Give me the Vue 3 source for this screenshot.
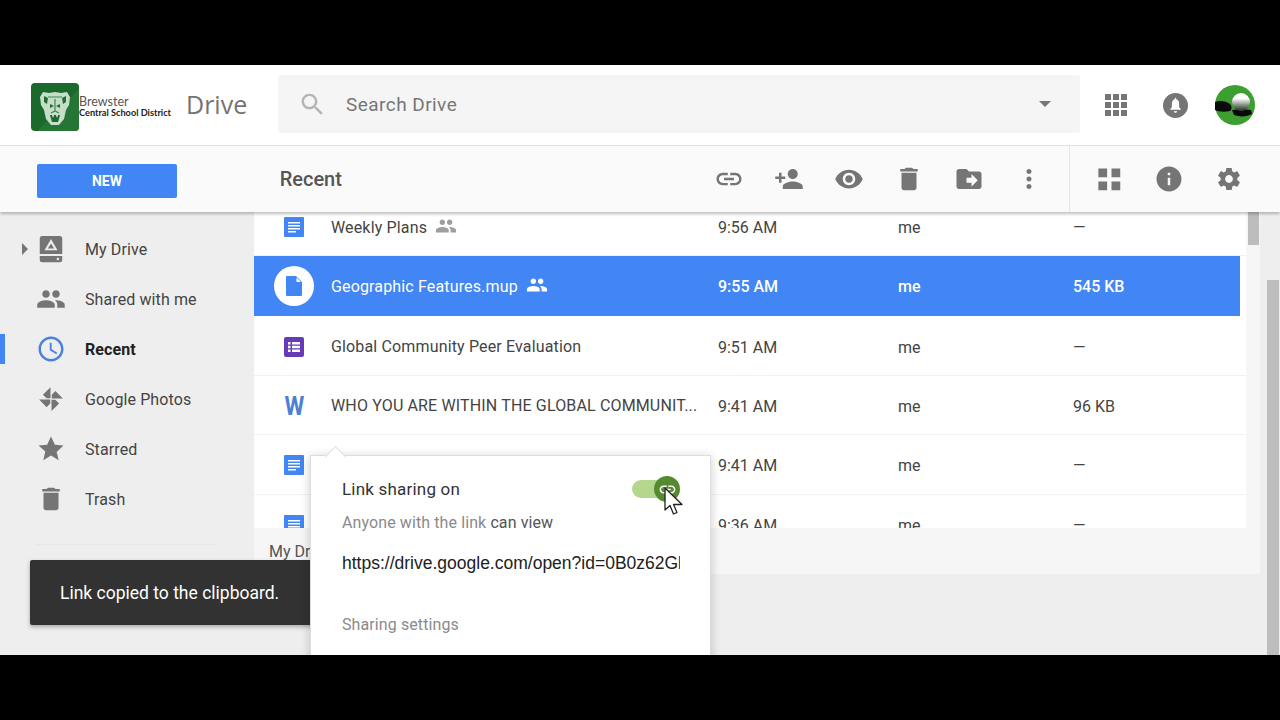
<script setup>
const P = {
  link: 'M3.9 12c0-1.71 1.39-3.1 3.1-3.1h4V7H7c-2.76 0-5 2.24-5 5s2.24 5 5 5h4v-1.9H7c-1.71 0-3.1-1.39-3.1-3.1zM8 13h8v-2H8v2zm9-6h-4v1.9h4c1.71 0 3.1 1.39 3.1 3.1s-1.39 3.1-3.1 3.1h-4V17h4c2.76 0 5-2.24 5-5s-2.24-5-5-5z',
  addPerson: 'M15 12c2.21 0 4-1.79 4-4s-1.79-4-4-4-4 1.79-4 4 1.79 4 4 4zm-9-2V7H4v3H1v2h3v3h2v-3h3v-2H6zm9 4c-2.67 0-8 1.34-8 4v2h16v-2c0-2.66-5.33-4-8-4z',
  eye: 'M12 4.5C7 4.5 2.73 7.61 1 12c1.73 4.39 6 7.5 11 7.5s9.27-3.11 11-7.5c-1.73-4.39-6-7.5-11-7.5zM12 17c-2.76 0-5-2.24-5-5s2.24-5 5-5 5 2.24 5 5-2.24 5-5 5zm0-8c-1.66 0-3 1.34-3 3s1.34 3 3 3 3-1.34 3-3-1.34-3-3-3z',
  trash: 'M6 19c0 1.1.9 2 2 2h8c1.1 0 2-.9 2-2V7H6v12zM19 4h-3.5l-1-1h-5l-1 1H5v2h14V4z',
  move: 'M20 6h-8l-2-2H4c-1.1 0-2 .9-2 2v12c0 1.1.9 2 2 2h16c1.1 0 2-.9 2-2V8c0-1.1-.9-2-2-2zm-6 12v-3h-4v-4h4V8l5 5-5 5z',
  more: 'M12 8c1.1 0 2-.9 2-2s-.9-2-2-2-2 .9-2 2 .9 2 2 2zm0 2c-1.1 0-2 .9-2 2s.9 2 2 2 2-.9 2-2-.9-2-2-2zm0 6c-1.1 0-2 .9-2 2s.9 2 2 2 2-.9 2-2-.9-2-2-2z',
  grid: 'M3.5 3.5h7v7h-7zM14 3.5h7v7h-7zM3.5 14h7v7h-7zM14 14h7v7h-7z',
  info: 'M12 2C6.48 2 2 6.48 2 12s4.48 10 10 10 10-4.48 10-10S17.52 2 12 2zm1 15h-2v-6h2v6zm0-8h-2V7h2v2z',
  gear: 'M19.43 12.98c.04-.32.07-.64.07-.98s-.03-.66-.07-.98l2.11-1.65c.19-.15.24-.42.12-.64l-2-3.46c-.12-.22-.39-.3-.61-.22l-2.49 1c-.52-.4-1.08-.73-1.69-.98l-.38-2.65C14.46 2.18 14.25 2 14 2h-4c-.25 0-.46.18-.49.42l-.38 2.65c-.61.25-1.17.59-1.69.98l-2.49-1c-.23-.09-.49 0-.61.22l-2 3.46c-.13.22-.07.49.12.64l2.11 1.65c-.04.32-.07.65-.07.98s.03.66.07.98l-2.11 1.65c-.19.15-.24.42-.12.64l2 3.46c.12.22.39.3.61.22l2.49-1c.52.4 1.08.73 1.69.98l.38 2.65c.03.24.24.42.49.42h4c.25 0 .46-.18.49-.42l.38-2.65c.61-.25 1.17-.59 1.69-.98l2.49 1c.23.09.49 0 .61-.22l2-3.46c.12-.22.07-.49-.12-.64l-2.11-1.65zM12 15.5c-1.93 0-3.5-1.57-3.5-3.5s1.57-3.5 3.5-3.5 3.5 1.57 3.5 3.5-1.57 3.5-3.5 3.5z',
  people: 'M16 11c1.66 0 2.99-1.34 2.99-3S17.66 5 16 5c-1.66 0-3 1.34-3 3s1.34 3 3 3zm-8 0c1.66 0 2.99-1.34 2.99-3S9.66 5 8 5C6.34 5 5 6.34 5 8s1.34 3 3 3zm0 2c-2.33 0-7 1.17-7 3.5V19h14v-2.5c0-2.33-4.67-3.5-7-3.5zm8 0c-.29 0-.62.02-.97.05 1.16.84 1.97 1.97 1.97 3.45V19h6v-2.5c0-2.33-4.67-3.5-7-3.5z',
  star: 'M12 17.27L18.18 21l-1.64-6.53L22 9.24l-6.91-.59L12 2 8.91 8.65 2 9.24l5.46 4.73L5.82 21z',
  clock: 'M11.99 2C6.47 2 2 6.48 2 12s4.47 10 9.99 10C17.52 22 22 17.52 22 12S17.52 2 11.99 2zM12 20c-4.42 0-8-3.58-8-8s3.58-8 8-8 8 3.58 8 8-3.58 8-8 8zm.5-13H11v6l5.25 3.15.75-1.23-4.5-2.67z',
  photos: 'M11.6 11.4V2.5l-6.1 6 3 2.9zM12.6 11.6h8.9l-6-6.1-2.9 3zM12.4 12.6v8.900l6.100-6-3-2.900zM11.400 12.400H2.500l6 6.100 2.900-3z',
  drive: 'M5 1.5h14a2 2 0 0 1 2 2V16H3V3.5a2 2 0 0 1 2-2zM12 4L6.8 13h10.4zM12 7.5l2.5 4h-5zM3 17.5h18v3a2 2 0 0 1-2 2H5a2 2 0 0 1-2-2zM17.5 19a1 1 0 1 0 0 2 1 1 0 0 0 0-2z',
  search: 'M15.5 14h-.79l-.28-.27C15.41 12.59 16 11.11 16 9.5 16 5.91 13.09 3 9.5 3S3 5.91 3 9.5 5.91 16 9.5 16c1.61 0 3.09-.59 4.23-1.57l.27.28v.79l5 4.99L20.49 19l-4.99-5zm-6 0C7.01 14 5 11.99 5 9.5S7.01 5 9.5 5 14 7.01 14 9.5 11.99 14 9.5 14z'
}

const topActions = [P.link, P.addPerson, P.eye, P.trash, P.move, P.more]

const nav = [
  { label: 'My Drive', icon: P.drive, arrow: true },
  { label: 'Shared with me', icon: P.people },
  { label: 'Recent', icon: P.clock, active: true },
  { label: 'Google Photos', icon: P.photos },
  { label: 'Starred', icon: P.star },
  { label: 'Trash', icon: P.trash }
]

// the last two names sit behind the sharing popup
const rows = [
  { id: 1, name: 'Weekly Plans', type: 'doc', shared: true, time: '9:56 AM', size: '—' },
  { id: 2, name: 'Geographic Features.mup', type: 'file', shared: true, selected: true, time: '9:55 AM', size: '545 KB' },
  { id: 3, name: 'Global Community Peer Evaluation', type: 'form', time: '9:51 AM', size: '—' },
  { id: 4, name: 'WHO YOU ARE WITHIN THE GLOBAL COMMUNIT...', type: 'word', time: '9:41 AM', size: '96 KB' },
  { id: 5, name: '', type: 'doc', time: '9:41 AM', size: '—' },
  { id: 6, name: '', type: 'doc', time: '9:36 AM', size: '—' }
]
</script>

<template>
  <div class="screen">
    <div class="letterbox"></div>
    <div class="app">
      <header class="header">
        <div class="brand">
          <svg class="crest" viewBox="0 0 48 48">
            <rect width="48" height="48" rx="4" fill="#1b6a2b" />
            <path d="M48 6v38a4 4 0 0 1-4 4H6z" fill="#257534" />
            <path d="M9 14l3-5 6 1 6-1 6 1 6-1 3 5-1 8-3 5-2 9-5 6h-8l-5-6-2-9-3-5z" fill="#c6ddc8" />
            <path d="M13 13l4 2-1 6-3-2zM35 13l-4 2 1 6 3-2zM19 21l4 2-4 2zM29 21l-4 2 4 2z" fill="#1f6d2f" />
            <path d="M24 16v12M20 30l4-2 4 2M17 14h14" stroke="#3f8a4d" stroke-width="1.2" fill="none" />
            <path d="M19 32h10l-2 7h-6z" fill="#1b6a2b" />
            <path d="M21 32l1 3 1-3zM27 32l-1 3-1-3z" fill="#e6f1e6" />
          </svg>
          <div class="district">
            <span class="district-top">Brewster</span>
            <span class="district-bottom">Central School District</span>
          </div>
          <span class="drive-title">Drive</span>
        </div>
        <div class="search">
          <svg class="search-icon" viewBox="0 0 24 24"><path :d="P.search" /></svg>
          <span class="search-text">Search Drive</span>
          <span class="search-caret"></span>
        </div>
        <div class="header-right">
          <svg class="apps" viewBox="0 0 22 22">
            <rect v-for="n in 9" :key="n" :x="(n - 1) % 3 * 8" :y="Math.floor((n - 1) / 3) * 8" width="6" height="6" />
          </svg>
          <svg class="bell" viewBox="0 0 24 24">
            <circle cx="12" cy="12" r="12" fill="#757575" />
            <path d="M12 19c.9 0 1.6-.7 1.6-1.5h-3.2c0 .8.7 1.5 1.6 1.5zm5-3v-.7l-1.5-1.6v-3.4c0-2.1-1.1-3.8-2.8-4.3v-.5c0-.5-.3-.9-.7-.9s-.7.4-.7.9V6c-1.7.5-2.8 2.2-2.8 4.3v3.4L7 15.3v.7z" fill="#fff" />
          </svg>
          <svg class="avatar" viewBox="0 0 40 40">
            <defs>
              <linearGradient id="ball" x1="0" y1="0" x2="0" y2="1">
                <stop offset="0.3" stop-color="#fff" />
                <stop offset="0.9" stop-color="#3a4a3a" />
              </linearGradient>
            </defs>
            <circle cx="20" cy="20" r="20" fill="#3c9f30" />
            <path d="M0 17c5-2 11-1 15 2 2 2 2 6 0 7-5 1-11 1-15-1z" fill="#0a0a0a" />
            <path d="M17 25c5-1 13-1 19 0l1 4c-5 3-13 3-18 1z" fill="#0a0a0a" />
            <circle cx="26" cy="17" r="9" fill="url(#ball)" />
          </svg>
        </div>
      </header>

      <div class="toolbar">
        <div class="toolbar-left"><button class="new-btn">NEW</button></div>
        <div class="toolbar-title">Recent</div>
        <div class="tool-group">
          <svg v-for="(d, i) in topActions" :key="i" class="tool" viewBox="0 0 24 24"><path :d="d" fill-rule="evenodd" /></svg>
        </div>
        <div class="tool-group views">
          <svg class="tool" viewBox="0 0 24 24"><path :d="P.grid" /></svg>
          <svg class="tool" viewBox="0 0 24 24"><path :d="P.info" /></svg>
          <svg class="tool" viewBox="-1.5 -1.5 27 27"><path :d="P.gear" /></svg>
        </div>
      </div>

      <div class="main">
        <aside class="sidebar">
          <div v-for="item in nav" :key="item.label" class="nav-item" :class="{ active: item.active }">
            <span class="nav-arrow" :class="{ on: item.arrow }"></span>
            <svg class="nav-icon" viewBox="0 0 24 24"><path :d="item.icon" fill-rule="evenodd" /></svg>
            <span class="nav-label">{{ item.label }}</span>
          </div>
          <div class="nav-divider"></div>
        </aside>

        <section class="content">
          <div class="list-area">
            <div class="list">
              <div v-for="row in rows" :key="row.id" class="row" :class="{ selected: row.selected }">
                <div class="type-cell">
                  <svg v-if="row.type === 'doc'" class="type-icon" viewBox="0 0 20 20">
                    <rect width="20" height="20" rx="1" fill="#4285f4" />
                    <path d="M4 5h12v1.5H4zM4 8h12v1.5H4zM4 11h12v1.5H4zM4 14h8v1.5H4z" fill="#fff" />
                  </svg>
                  <svg v-else-if="row.type === 'form'" class="type-icon" viewBox="0 0 20 20">
                    <rect width="20" height="20" rx="2" fill="#673ab7" />
                    <path d="M4 5h2.5v2.5H4zM8 5h8v2.5H8zM4 8.8h2.5v2.5H4zM8 8.8h8v2.5H8zM4 12.6h2.5v2.5H4zM8 12.6h8v2.5H8z" fill="#fff" />
                  </svg>
                  <span v-else-if="row.type === 'word'" class="word-icon">W</span>
                  <span v-else class="file-badge">
                    <svg class="file-icon" viewBox="0 0 16 20"><path d="M1 0h9l6 6v13a1 1 0 0 1-1 1H1a1 1 0 0 1-1-1V1a1 1 0 0 1 1-1zm9.5 1.5V6H15z" fill="#4285f4" fill-rule="evenodd" /></svg>
                  </span>
                </div>
                <div class="name-cell">
                  <span class="name">{{ row.name }}</span>
                  <svg v-if="row.shared" class="shared-icon" viewBox="0 0 24 24"><path :d="P.people" /></svg>
                </div>
                <div class="time-cell">{{ row.time }}</div>
                <div class="owner-cell">me</div>
                <div class="size-cell">{{ row.size }}</div>
              </div>
            </div>
            <div class="list-scroll"><div class="list-thumb"></div></div>
          </div>
          <div class="path-bar">My Drive</div>
        </section>

        <div class="page-scroll"><div class="page-thumb"></div></div>
      </div>

      <div class="toast">Link copied to the clipboard.</div>

      <div class="popup">
        <div class="popup-head">
          <span>Link sharing on</span>
          <span class="switch">
            <span class="switch-knob">
              <svg viewBox="0 0 24 24"><path :d="P.link" /></svg>
            </span>
          </span>
        </div>
        <div class="popup-sub">Anyone with the link <span class="popup-strong">can view</span></div>
        <div class="popup-url">https://drive.google.com/open?id=0B0z62GlxQ7mVc2hhcmluZw</div>
        <div class="popup-settings">Sharing settings</div>
      </div>

      <svg class="cursor" viewBox="0 0 20 29">
        <path d="M1 1v22l5-4.5 3.5 8.5 3.5-1.5-3.5-8H18z" fill="#fff" stroke="#222" stroke-width="1.3" stroke-linejoin="round" />
      </svg>
    </div>
    <div class="letterbox"></div>
  </div>
</template>

<style>
html, body {
  margin: 0;
  background: #000;
}
</style>

<style scoped>
.screen {
  width: 1280px;
  height: 720px;
  display: flex;
  flex-direction: column;
  overflow: hidden;
  font-family: Roboto, "Liberation Sans", sans-serif;
  background: #000;
}

.letterbox {
  height: 65px;
  flex-shrink: 0;
  background: #000;
}

.app {
  position: relative;
  height: 590px;
  display: flex;
  flex-direction: column;
  overflow: hidden;
  background: #eee;
}

.header {
  height: 80px;
  flex-shrink: 0;
  display: flex;
  align-items: center;
  background: #fff;
  border-bottom: 1px solid #e5e5e5;
}

.brand {
  width: 278px;
  padding-left: 31px;
  box-sizing: border-box;
  display: flex;
  align-items: center;
}

.crest {
  width: 48px;
  height: 48px;
  margin-top: 4px;
  flex-shrink: 0;
}

.district {
  width: 107px;
  margin-top: 4px;
  display: flex;
  flex-direction: column;
  white-space: nowrap;
}

.district-top {
  font-family: Lato, sans-serif;
  font-size: 12.5px;
  line-height: 11px;
  color: #555;
}

.district-bottom {
  font-family: Lato, sans-serif;
  font-size: 9.2px;
  line-height: 11px;
  font-weight: 700;
  color: #222;
}

.drive-title {
  margin-top: -2px;
  font-family: "Open Sans", sans-serif;
  font-size: 25px;
  color: #737373;
}

.search {
  width: 802px;
  height: 58px;
  margin-top: -2px;
  padding: 0 29px 0 20px;
  box-sizing: border-box;
  display: flex;
  align-items: center;
  background: #f5f5f5;
  border-radius: 3px;
}

.search-icon {
  width: 29px;
  height: 29px;
  fill: #b4b4b4;
}

.search-text {
  margin-left: 19px;
  flex: 1;
  font-size: 19px;
  letter-spacing: 0.45px;
  color: #777;
}

.search-caret {
  width: 0;
  height: 0;
  border-left: 6px solid transparent;
  border-right: 6px solid transparent;
  border-top: 6px solid #757575;
}

.header-right {
  flex: 1;
  display: flex;
  align-items: center;
  padding-left: 25px;
}

.apps {
  width: 22px;
  height: 22px;
  fill: #757575;
}

.bell {
  width: 25px;
  height: 25px;
  margin-left: 36px;
}

.avatar {
  width: 40px;
  height: 40px;
  margin-left: 27px;
}

.toolbar {
  position: relative;
  z-index: 2;
  height: 66px;
  flex-shrink: 0;
  display: flex;
  align-items: center;
  background: #fafafa;
  box-shadow: 0 2px 3px rgba(0, 0, 0, 0.25);
}

.toolbar-left {
  width: 280px;
  padding-left: 37px;
  box-sizing: border-box;
}

.new-btn {
  display: block;
  width: 140px;
  height: 34px;
  margin-top: 4px;
  border: 0;
  border-radius: 2px;
  background: #4285f4;
  color: #fff;
  font-family: Roboto, sans-serif;
  font-size: 14px;
  font-weight: 700;
}

.toolbar-title {
  width: 435px;
  font-size: 20px;
  font-weight: 500;
  color: #555;
}

.tool-group {
  display: flex;
  align-items: center;
  gap: 30px;
  height: 100%;
  padding-right: 25px;
}

.tool-group.views {
  padding: 0 36px 0 24px;
  border-left: 1px solid #e5e5e5;
}

.tool {
  width: 30px;
  height: 30px;
  fill: #757575;
}

.main {
  flex: 1;
  min-height: 0;
  display: flex;
}

.sidebar {
  width: 254px;
  flex-shrink: 0;
  padding-top: 12px;
  box-sizing: border-box;
  background: #eee;
}

.nav-item {
  position: relative;
  height: 50px;
  display: flex;
  align-items: center;
  padding-left: 22px;
  font-size: 16px;
  letter-spacing: 0.1px;
  color: #444;
}

.nav-item.active {
  font-weight: 700;
  color: #212121;
}

.nav-item.active::before {
  content: "";
  position: absolute;
  left: 0;
  top: 10px;
  width: 5px;
  height: 30px;
  background: #4285f4;
}

.nav-arrow {
  width: 0;
  height: 0;
  border-top: 6px solid transparent;
  border-bottom: 6px solid transparent;
  border-left: 6px solid transparent;
}

.nav-arrow.on {
  border-left-color: #757575;
}

.nav-icon {
  width: 30px;
  height: 30px;
  margin-left: 8px;
  fill: #757575;
}

.active .nav-icon {
  fill: #4a80e0;
}

.nav-label {
  margin-left: 19px;
}

.nav-divider {
  height: 1px;
  margin: 20px 38px 0 36px;
  background: #e6e6e6;
}

.content {
  width: 1006px;
  flex-shrink: 0;
  display: flex;
  flex-direction: column;
}

.list-area {
  height: 316px;
  flex-shrink: 0;
  display: flex;
  overflow: hidden;
  background: #fff;
}

.list {
  width: 992px;
  flex-shrink: 0;
  margin-top: -15px;
}

.row {
  height: 59.4px;
  padding-top: 2px;
  box-sizing: border-box;
  display: flex;
  align-items: center;
  width: 992px;
  border-bottom: 1px solid #f1f1f1;
  font-size: 16px;
  color: #444;
}

.row.selected {
  width: 986px;
  height: 60px;
  padding-top: 0;
  border-bottom: 0;
  background: #4285f4;
  color: #fff;
}

.type-cell {
  width: 77px;
  padding-left: 3px;
  box-sizing: border-box;
  flex-shrink: 0;
  display: flex;
  justify-content: center;
}

.type-icon {
  width: 20px;
  height: 20px;
}

.word-icon {
  font-size: 26px;
  line-height: 26px;
  font-weight: 700;
  color: #4a80d8;
  transform: scaleX(0.87);
}

.file-badge {
  width: 40px;
  height: 40px;
  display: flex;
  align-items: center;
  justify-content: center;
  border-radius: 50%;
  background: #fff;
}

.file-icon {
  width: 16px;
  height: 20px;
}

.name-cell {
  width: 387px;
  flex-shrink: 0;
  display: flex;
  align-items: center;
  gap: 8px;
  white-space: nowrap;
  letter-spacing: 0.15px;
}

.shared-icon {
  width: 22px;
  height: 22px;
  margin-top: -3px;
  fill: #9e9e9e;
}

.selected .shared-icon {
  fill: #fff;
}

.time-cell,
.owner-cell,
.size-cell {
  margin-top: 1px;
}

.time-cell {
  width: 180px;
  flex-shrink: 0;
}

.owner-cell {
  width: 175px;
  flex-shrink: 0;
}

.selected .time-cell,
.selected .owner-cell,
.selected .size-cell {
  font-weight: 500;
}

.list-scroll {
  width: 14px;
  flex-shrink: 0;
  background: #f6f6f6;
}

.list-thumb {
  width: 11px;
  height: 33px;
  margin-left: 2px;
  background: #bdbdbd;
}

.path-bar {
  height: 46px;
  flex-shrink: 0;
  padding-left: 15px;
  line-height: 48px;
  font-size: 16px;
  color: #555;
  background: #f6f6f6;
}

.page-scroll {
  width: 20px;
  flex-shrink: 0;
  background: #eee;
}

.page-thumb {
  width: 12px;
  height: 375px;
  margin: 68px 0 0 7px;
  background: #bdbdbd;
}

.toast {
  position: absolute;
  left: 30px;
  top: 495px;
  width: 320px;
  height: 65px;
  padding-left: 30px;
  box-sizing: border-box;
  line-height: 67px;
  font-size: 17.5px;
  color: #fff;
  background: #323232;
  border-radius: 2px;
  box-shadow: 0 2px 4px rgba(0, 0, 0, 0.3);
}

.popup {
  position: absolute;
  left: 310px;
  top: 390px;
  width: 401px;
  height: 220px;
  padding: 22px 31px 0;
  box-sizing: border-box;
  background: #fff;
  border: 1px solid #ddd;
  box-shadow: 0 2px 10px rgba(0, 0, 0, 0.2);
}

.popup::before {
  content: "";
  position: absolute;
  left: 17px;
  top: -7px;
  width: 14px;
  height: 14px;
  background: #fff;
  border-top: 1px solid #ddd;
  border-left: 1px solid #ddd;
  transform: rotate(45deg);
}

.popup-head {
  height: 22px;
  display: flex;
  align-items: center;
  justify-content: space-between;
  font-size: 17px;
  letter-spacing: 0.2px;
  color: #333;
}

.switch {
  position: relative;
  width: 40px;
  height: 18px;
  margin-right: 7px;
  border-radius: 9px;
  background: #b4d78d;
}

.switch-knob {
  position: absolute;
  right: -8px;
  top: -4px;
  width: 26px;
  height: 26px;
  display: flex;
  align-items: center;
  justify-content: center;
  border-radius: 50%;
  background: #558b2f;
}

.switch-knob svg {
  width: 19px;
  height: 19px;
  fill: #fff;
}

.popup-sub {
  margin-top: 13px;
  font-size: 16px;
  letter-spacing: 0.1px;
  color: #8a8a8a;
}

.popup-strong {
  color: #555;
}

.popup-url {
  width: 338px;
  margin-top: 21px;
  overflow: hidden;
  white-space: nowrap;
  font-family: "Liberation Sans", Arial, sans-serif;
  font-size: 17.5px;
  color: #212121;
}

.popup-settings {
  margin-top: 41px;
  font-size: 16px;
  letter-spacing: 0.1px;
  color: #8a8a8a;
}

.cursor {
  position: absolute;
  left: 664px;
  top: 422px;
  width: 20px;
  height: 29px;
}
</style>
